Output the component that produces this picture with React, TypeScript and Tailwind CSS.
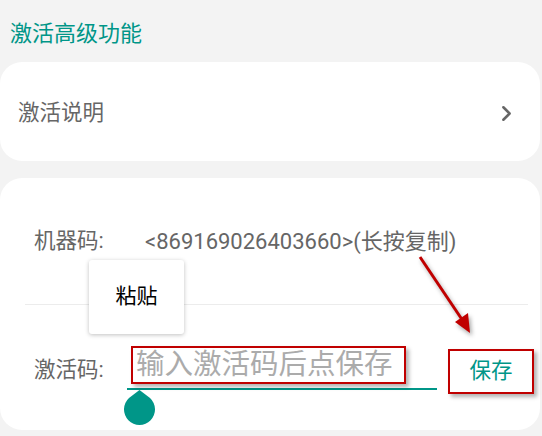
import { ChevronRight } from "lucide-react";

const font = "font-['Roboto','Noto_Sans_CJK_SC',sans-serif]";

function PasteMenu() {
  return (
    <div className="absolute left-[89px] top-[82px] w-[95px] h-[74px] bg-white rounded-[3px] shadow-[0_1px_4px_rgba(0,0,0,0.25)] flex items-center justify-center">
      <span className="text-[21px] text-black">粘贴</span>
    </div>
  );
}

function Arrow() {
  return (
    <svg
      className="absolute left-[410px] top-[72px] drop-shadow-[2px_3px_2px_rgba(0,0,0,0.35)]"
      width="70"
      height="90"
      viewBox="0 0 70 90"
    >
      <line x1="10" y1="7" x2="53" y2="71" stroke="#c00000" strokeWidth="3" />
      <polygon points="60,83 45,72 58,63" fill="#c00000" />
    </svg>
  );
}

function App() {
  return (
    <div className={`w-[542px] h-[436px] bg-[#f3f3f3] overflow-hidden ${font}`}>
      <div className="h-[62px] flex items-center pl-[10px] pt-[5px]">
        <h1 className="text-[22px] text-[#009688]">激活高级功能</h1>
      </div>

      <div className="w-[540px] h-[99px] bg-white rounded-[22px] flex items-center justify-between pl-[18px] pr-[21px] pt-[3px]">
        <span className="text-[21.5px] text-[#666]">激活说明</span>
        <ChevronRight className="w-[25px] h-[25px] text-[#666]" strokeWidth={2.4} />
      </div>

      <div className="relative mt-[17px] w-[540px] h-[252px] bg-white rounded-[22px] pl-[25px]">
        <div className="h-[126px] flex items-center pl-[9px]">
          <span className="w-[111px] shrink-0 text-[21.5px] text-[#666]">机器码:</span>
          <span className="text-[22px] text-[#666] whitespace-nowrap">&lt;869169026403660&gt;(长按复制)</span>
        </div>
        <div className="h-px bg-[#ececec] mr-[12px]" />
        <div className="h-[125px] flex items-center pl-[9px] pt-[6px]">
          <span className="w-[93px] shrink-0 text-[21.5px] text-[#666]">激活码:</span>
          <div className="relative w-[310px] shrink-0 h-[46px] border-b-[2.5px] border-[#009688] flex items-center mt-[-7px]">
            <div className="ml-[4px] mt-[-2px] w-[275px] h-[38px] border-[2.5px] border-[#c00000] shadow-[3px_3px_4px_rgba(0,0,0,0.3)] flex items-center pl-[3px]">
              <span className="text-[28.5px] leading-none text-[#ababab] whitespace-nowrap">输入激活码后点保存</span>
            </div>
            <svg className="absolute left-[-4px] top-[46px]" width="33" height="36" viewBox="0 0 33 36">
              <path d="M16.5 0 L27 8 A15.5 15.5 0 1 1 6 8 Z" fill="#009688" />
            </svg>
          </div>
          <div className="ml-[11px] mt-[1px] w-[86px] h-[45px] shrink-0 border-[2.5px] border-[#c00000] shadow-[3px_3px_4px_rgba(0,0,0,0.3)] flex items-center justify-center">
            <span className="text-[21.5px] text-[#009688]">保存</span>
          </div>
        </div>
        <PasteMenu />
        <Arrow />
      </div>
    </div>
  );
}

export default App;
